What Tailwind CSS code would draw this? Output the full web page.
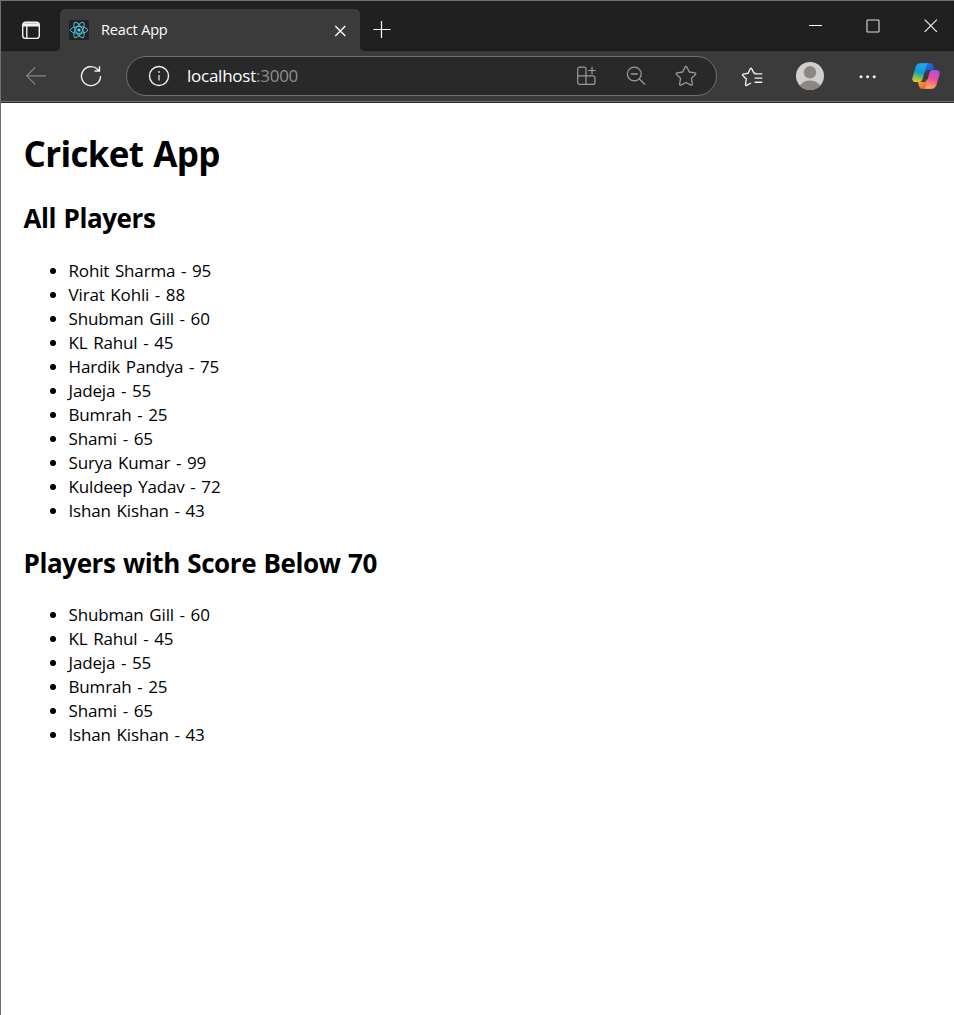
<!DOCTYPE html>
<html lang="en">
<head>
<meta charset="utf-8">
<title>React App</title>
<script src="https://cdn.jsdelivr.net/npm/@tailwindcss/browser@4"></script>
</head>
<body class="h-[1015px] w-[954px] overflow-hidden border-t border-l border-[#707070] bg-white font-['Open_Sans','Noto_Sans',sans-serif] text-black">
<header class="bg-[#3b3b3b]">
  <div class="flex h-[50px] bg-[#3b3b3b]">
    <div class="flex w-[59px] items-start rounded-br-[5px] bg-[#202020] pt-[20px] pl-[20px] shadow-[inset_0_-1px_1px_#1a1a1a]">
      <svg class="size-5" viewBox="0 0 20 20" fill="none" stroke="#f2f2f2" stroke-width="1.4"><rect x="1.7" y="1.2" width="16.6" height="16.2" rx="3"/><path d="M2 2.2h16v3.3h-16z" fill="#f2f2f2" stroke="none"/><path d="M5.8 5v12.4"/></svg>
    </div>
    <div class="flex w-[300px] bg-[#202020]">
      <div class="flex h-[42px] w-full self-end rounded-t-[5px] bg-[#3b3b3b] pl-[9px]">
        <div class="mt-[11px] size-5 rounded-[2px] bg-[#222222]">
          <svg class="size-5" viewBox="0 0 20 20" fill="none" stroke="#53bcd8" stroke-width="1"><ellipse cx="10" cy="10" rx="8.6" ry="3.4"/><ellipse cx="10" cy="10" rx="8.6" ry="3.4" transform="rotate(60 10 10)"/><ellipse cx="10" cy="10" rx="8.6" ry="3.4" transform="rotate(120 10 10)"/><circle cx="10" cy="10" r="1.6" fill="#61dafb" stroke="none"/></svg>
        </div>
        <span class="mt-[11px] ml-3 w-[230px] text-[14.5px] leading-5 tracking-[-0.15px] text-white">React App</span>
        <svg class="mt-[16px] ml-[3px] size-3" viewBox="0 0 12 12" stroke="#f4f4f4" stroke-width="1.5"><path d="M1.3 1l10 10M11.3 1l-10 10"/></svg>
      </div>
    </div>
    <div class="flex flex-1 rounded-bl-[5px] bg-[#202020] shadow-[inset_0_-1px_1px_#1a1a1a]">
      <svg class="mt-[19px] ml-[13px] size-[18px]" viewBox="0 0 18 18" stroke="#fff" stroke-width="1.2"><path d="M0.4 9.5h17.2M8.5 1v17"/></svg>
      <div class="ml-auto flex pt-[17px] pr-[16px]">
        <svg class="size-[15px]" viewBox="0 0 15 15" stroke="#fff" stroke-width="1"><path d="M2 7.5h13"/></svg>
        <svg class="ml-[43px] size-[15px]" viewBox="0 0 15 15" fill="none" stroke="#dedede" stroke-width="1.1"><rect x="2" y="2" width="12" height="12" rx=".7"/></svg>
        <svg class="ml-[43px] size-[15px]" viewBox="0 0 15 15" stroke="#eee" stroke-width="1.2"><path d="M1.7 1.7l12.2 12.2M13.9 1.7L1.7 13.9"/></svg>
      </div>
    </div>
  </div>
  <div class="flex h-[52px] items-start border-b border-[#292929] shadow-[inset_0_-1px_0_#737373]">
    <svg class="mt-[14px] ml-[24px] size-[22px]" viewBox="0 0 22 22" fill="none" stroke="#858585" stroke-width="1.2"><path d="M21 10.8H1.8M10.2 2.3L1.7 10.8l8.5 8.5"/></svg>
    <svg class="mt-[14px] ml-[33px] size-[22px]" viewBox="0 0 22 22" fill="none" stroke="#f2f2f2" stroke-width="1.4"><path d="M20.5 11a9.5 9.5 0 1 1-3-6.8L19.5 6M19.5 1.3V6h-5"/></svg>
    <div class="mt-[5px] ml-[24px] flex h-10 w-[591px] items-center rounded-full border border-[#707070] bg-[#292929]">
      <svg class="ml-[21px] size-[22px]" viewBox="0 0 22 22" fill="none" stroke="#f0f0f0" stroke-width="1.4"><circle cx="11" cy="11" r="9.5"/><path d="M11 10v5.5" stroke="#c8c8c8" stroke-width="1.5"/><circle cx="11" cy="7" r="1" fill="#d0d0d0" stroke="none"/></svg>
      <span class="mb-px ml-[17px] text-[17px] leading-6 tracking-[-0.25px] text-white">localhost<span class="text-[#8f8f8f]">:3000</span></span>
      <div class="mr-[19px] ml-auto flex gap-[28px]">
        <svg class="size-[22px]" viewBox="0 0 22 22" fill="none" stroke="#9b9b9b" stroke-width="1.2"><path d="M11 19.4H4.7a2 2 0 0 1-2-2V4.2a2 2 0 0 1 2-2H9a2 2 0 0 1 2 2v6.7h6.9a2 2 0 0 1 2 2v4.5a2 2 0 0 1-2 2zM2.7 10.9H11v8.5M17 1.7v7.6M13.2 5.5h7.6"/></svg>
        <svg class="size-[22px]" viewBox="0 0 22 22" fill="none" stroke="#9b9b9b" stroke-width="1.3"><circle cx="9.3" cy="9" r="6.9"/><path d="M5.8 9h7M14.3 14l5.8 5.5"/></svg>
        <svg class="size-[22px]" viewBox="0 0 22 22" fill="none" stroke="#9b9b9b" stroke-width="1.3" stroke-linejoin="round"><path d="M10.1 2.1q.9-1.4 1.8 0L14.3 7l5.6.8q1.6.5.5 1.7L16.4 13.4l1 5.6q.1 1.6-1.4 1.1L11 17.5 6 20.1q-1.5.5-1.4-1.1l1-5.6L1.6 9.5Q.5 8.3 2.1 7.8L7.7 7z"/></svg>
      </div>
    </div>
    <svg class="mt-[15px] ml-[24px] size-[22px]" viewBox="0 0 22 22" fill="none" stroke="#f0f0f0" stroke-width="1.4" stroke-linejoin="round"><path d="M14.8 7.3l-2-.3-2.1-4.2q-.7-1.2-1.4 0L7.1 7.3l-4.9.8q-1.2.3-.4 1.3l3.5 3.6-.8 5.5q0 1.3 1.2.8l4.4-2.3M13.5 7.9h7.8M13.5 12.1h7.8M13.5 16.3h7.8"/></svg>
    <svg class="mt-[11px] ml-[33px] size-[28px]" viewBox="0 0 28 28"><defs><clipPath id="av"><circle cx="14" cy="14" r="14"/></clipPath></defs><circle cx="14" cy="14" r="14" fill="#d1cecb"/><g fill="#8a8785" clip-path="url(#av)"><circle cx="14" cy="10.3" r="6.2"/><ellipse cx="14" cy="27" rx="11" ry="8.5"/></g></svg>
    <svg class="mt-[21px] ml-[35px] h-[10px] w-[18px]" viewBox="0 0 18 10" fill="#f5f5f5"><circle cx="2" cy="4.7" r="1.5"/><circle cx="8.6" cy="4.7" r="1.5"/><circle cx="15.2" cy="4.7" r="1.5"/></svg>
    <svg class="mt-[11px] ml-[35px] size-[28px]" viewBox="0 0 28 28">
      <defs>
        <linearGradient id="ca" x1=".4" y1="0" x2=".2" y2="1"><stop offset="0" stop-color="#22a7f0"/><stop offset=".45" stop-color="#1799c9"/><stop offset=".7" stop-color="#6dbb68"/><stop offset="1" stop-color="#f7cc18"/></linearGradient>
        <linearGradient id="cb" x1=".7" y1="0" x2=".4" y2="1"><stop offset="0" stop-color="#a94cf0"/><stop offset=".5" stop-color="#ef5295"/><stop offset="1" stop-color="#ffad5c"/></linearGradient>
        <linearGradient id="cc" x1="0" y1="0" x2="1" y2="1"><stop offset="0" stop-color="#168eea"/><stop offset="1" stop-color="#203dce"/></linearGradient>
        <linearGradient id="cd" x1="0" y1="0" x2="1" y2="1"><stop offset="0" stop-color="#ffb02d"/><stop offset="1" stop-color="#f0443c"/></linearGradient>
      </defs>
      <path d="M8 1.3h10.2c2 0 2.8 1.5 3.3 3.4l.8 3.2h-5.5c-2 0-3 1-3.6 3z" fill="url(#cc)"/>
      <path d="M20 26.8H10.1c-2 0-2.8-1.5-3.3-3.4L5.9 20h5.6c2 0 3-1 3.5-3z" fill="url(#cd)"/>
      <path d="M16 1.3H8.4c-2.8 0-4.3 2-5 4.4L.6 15.2C-.4 18.4 1.3 20 3.8 20h3.1c2.2 0 3.2-1.2 3.8-3.3l3.4-12c.4-1.7.9-2.7 1.9-3.4z" fill="url(#ca)"/>
      <path d="M12.1 26.8h7.5c2.8 0 4.3-2 5-4.4l2.8-9.6c1-3.2-.7-4.9-3.2-4.9h-3.1c-2.2 0-3.2 1.2-3.8 3.3l-3.4 12.2c-.4 1.7-.8 2.7-1.8 3.4z" fill="url(#cb)"/>
    </svg>
  </div>
</header>
<main class="pl-[22.5px] text-[17px] leading-6 tracking-[-0.15px] [word-spacing:1.4px]">
  <h1 class="pt-[27px] text-[35px] leading-[48px] font-bold tracking-[-0.65px]">Cricket App</h1>
  <h2 class="pt-[22px] text-[26px] leading-9 font-bold tracking-[-0.4px] [word-spacing:1px]">All Players</h2>
  <ul class="mt-[23px] list-disc pl-[45px]">
    <li>Rohit Sharma - 95</li>
    <li>Virat Kohli - 88</li>
    <li>Shubman Gill - 60</li>
    <li>KL Rahul - 45</li>
    <li>Hardik Pandya - 75</li>
    <li>Jadeja - 55</li>
    <li>Bumrah - 25</li>
    <li>Shami - 65</li>
    <li>Surya Kumar - 99</li>
    <li>Kuldeep Yadav - 72</li>
    <li>Ishan Kishan - 43</li>
  </ul>
  <h2 class="pt-[22px] text-[26px] leading-9 font-bold tracking-[-0.4px] [word-spacing:1px]">Players with Score Below 70</h2>
  <ul class="mt-[22px] list-disc pl-[45px]">
    <li>Shubman Gill - 60</li>
    <li>KL Rahul - 45</li>
    <li>Jadeja - 55</li>
    <li>Bumrah - 25</li>
    <li>Shami - 65</li>
    <li>Ishan Kishan - 43</li>
  </ul>
</main>
</body>
</html>
